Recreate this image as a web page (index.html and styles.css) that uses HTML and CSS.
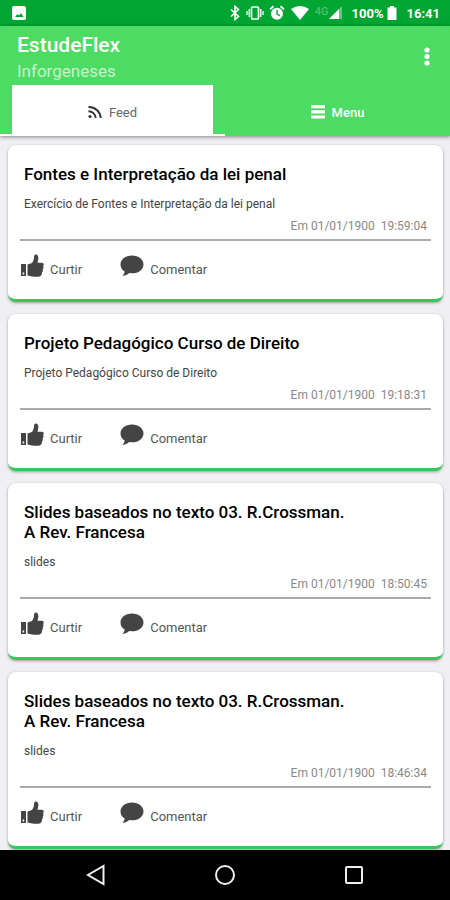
FILE: index.html
```html
<!DOCTYPE html>
<html lang="pt-BR">
<head>
<meta charset="utf-8">
<meta name="viewport" content="width=device-width, initial-scale=1">
<title>EstudeFlex</title>
<link rel="stylesheet" href="styles.css">
</head>
<body>
<svg class="defs" aria-hidden="true">
  <symbol id="thumb" viewBox="0 0 24 24">
    <path fill-rule="evenodd" d="M1 10h5v12H1zM2.600 18.500v2h1.600v-2z"/>
    <path d="M7.500 10.500 12 9c1.200-1.800 2-3.400 2-5.500 0-2 .5-3 1.800-3C18 .5 18.500 3 18.300 5l-.8 3.800h4.300c2 0 2.600 2.200 1.200 3.400.9 1 .7 2.400-.4 3.200.6 1 .3 2.300-.7 3 .4 2.400-.8 4-3.300 4.300-4 .3-7.200-.3-11.100-1.200z"/>
  </symbol>
  <symbol id="bubble" viewBox="0 0 24 24">
    <path d="M12 1.500c6.500 0 11.500 3.900 11.500 8.900s-5 8.900-11.500 8.900l-2.700-.2c-1.600 1.500-4 2.700-6.800 3 .9-1.200 2-2.900 2.200-4.500C2.200 16 .5 13.500.5 10.400.5 5.400 5.500 1.500 12 1.500z"/>
  </symbol>
</svg>
<div class="status">
  <svg class="photo" viewBox="0 0 14 14"><rect width="14" height="14" rx="2" fill="#fff"/><path d="M3 11l2.500-3L7 9.500 9 7l2.500 4z" fill="#00a532"/></svg>
  <div class="status-icons">
    <svg width="12" height="16" viewBox="0 0 12 16"><path d="M2 4.500l7.500 7L6 14.500v-13l3.500 3-7.500 7" fill="none" stroke="#fff" stroke-width="1.600"/></svg>
    <svg width="18" height="16" viewBox="0 0 18 16"><rect x="5.500" y="2" width="7" height="12" rx="1" fill="none" stroke="#fff" stroke-width="1.700"/><path d="M3.200 4v8M14.800 4v8M1 6v4M17 6v4" stroke="#fff" stroke-width="1.300"/></svg>
    <svg width="16" height="16" viewBox="0 0 16 16"><circle cx="8" cy="8.700" r="6" fill="#fff"/><path d="M1 4.200 4.500 1.300M15 4.200l-3.500-2.900" stroke="#fff" stroke-width="1.800"/><path d="M8 5v4l2.800 1.700" fill="none" stroke="#00a532" stroke-width="1.400"/></svg>
    <svg width="20" height="16" viewBox="0 0 20 16"><path d="M1 4q9-6 18 0l-9 11z" fill="#fff"/></svg>
    <span class="network">4G</span>
    <svg class="signal" width="13" height="14" viewBox="0 0 13 14"><path d="M13 0v13H0z" fill="#5fc87c"/><path d="M10 3v10H0z" fill="#fff"/></svg>
    <span class="battery">100%</span>
    <svg width="10" height="16" viewBox="0 0 10 16"><path d="M3 1h4v1.500h2.500V15H.5V2.500H3z" fill="#fff"/></svg>
    <time class="clock">16:41</time>
  </div>
</div>
<header class="header">
  <div class="bar">
    <div>
      <h1>EstudeFlex</h1>
      <p class="subtitle">Inforgeneses</p>
    </div>
    <button class="more" type="button" aria-label="Mais opções"><svg width="6" height="20" viewBox="0 0 6 20" fill="#fff"><circle cx="3" cy="3" r="2.600"/><circle cx="3" cy="9.500" r="2.600"/><circle cx="3" cy="16" r="2.600"/></svg></button>
  </div>
  <nav class="tabs">
    <a class="tab active" href="#feed"><span class="tab-face"><svg width="14" height="14" viewBox="0 0 14 14" fill="none" stroke="#333" stroke-width="1.900"><circle cx="2" cy="11.500" r="1.600" fill="#333" stroke="none"/><path d="M.5 6.300a7 7 0 0 1 7.200 6.700M.5 2a12 12 0 0 1 12.300 11"/></svg>Feed</span></a>
    <a class="tab" href="#menu"><span class="tab-face"><svg width="14" height="14" viewBox="0 0 14 14" fill="#fff"><path d="M0 0h14v3.200H0zM0 5.200h14v3.200H0zM0 10.400h14v3.200H0z"/></svg>Menu</span></a>
  </nav>
</header>
<main class="feed" id="feed">
  <article class="card">
    <h2>Fontes e Interpretação da lei penal</h2>
    <p class="text">Exercício de Fontes e Interpretação da lei penal</p>
    <p class="date">Em 01/01/1900 &nbsp;19:59:04</p>
    <div class="actions"><button type="button"><svg><use href="#thumb"/></svg><span>Curtir</span></button><button type="button"><svg><use href="#bubble"/></svg><span>Comentar</span></button></div>
  </article>
  <article class="card">
    <h2>Projeto Pedagógico Curso de Direito</h2>
    <p class="text">Projeto Pedagógico Curso de Direito</p>
    <p class="date">Em 01/01/1900 &nbsp;19:18:31</p>
    <div class="actions"><button type="button"><svg><use href="#thumb"/></svg><span>Curtir</span></button><button type="button"><svg><use href="#bubble"/></svg><span>Comentar</span></button></div>
  </article>
  <article class="card">
    <h2>Slides baseados no texto 03. R.Crossman.<br>A Rev. Francesa</h2>
    <p class="text">slides</p>
    <p class="date">Em 01/01/1900 &nbsp;18:50:45</p>
    <div class="actions"><button type="button"><svg><use href="#thumb"/></svg><span>Curtir</span></button><button type="button"><svg><use href="#bubble"/></svg><span>Comentar</span></button></div>
  </article>
  <article class="card">
    <h2>Slides baseados no texto 03. R.Crossman.<br>A Rev. Francesa</h2>
    <p class="text">slides</p>
    <p class="date">Em 01/01/1900 &nbsp;18:46:34</p>
    <div class="actions"><button type="button"><svg><use href="#thumb"/></svg><span>Curtir</span></button><button type="button"><svg><use href="#bubble"/></svg><span>Comentar</span></button></div>
  </article>
</main>
<nav class="system">
  <button type="button" aria-label="Voltar"><svg viewBox="0 0 22 22"><path d="M18.500 2v18L3 11z"/></svg></button>
  <button type="button" aria-label="Início"><svg viewBox="0 0 22 22"><circle cx="11" cy="11" r="9"/></svg></button>
  <button type="button" aria-label="Recentes"><svg viewBox="0 0 22 22"><rect x="3" y="3" width="16" height="16" rx="1"/></svg></button>
</nav>
</body>
</html>
```
FILE: styles.css
```css
* { box-sizing: border-box; }
body {
  margin: 0;
  min-height: 100vh;
  display: flex;
  flex-direction: column;
  background: #efeff4;
  font-family: Roboto, sans-serif;
  color: #000;
}
h1, h2, p { margin: 0; }
button { border: 0; padding: 0; background: none; font: inherit; color: inherit; }
svg { display: block; flex: none; }
.defs { position: absolute; width: 0; height: 0; }

.status {
  height: 26px;
  padding: 0 10px 0 12px;
  display: flex;
  align-items: center;
  justify-content: space-between;
  background: #00a532;
  color: #fff;
  font-size: 13px;
  font-weight: 700;
}
.photo { width: 14px; height: 14px; }
.status-icons { display: flex; align-items: center; }
.status-icons svg { margin-right: 5px; }
.network { align-self: flex-start; font-size: 11px; line-height: 14px; font-weight: 500; color: #4fc06e; }
.status-icons .signal { margin-right: 10px; }
.battery { margin-right: 3px; }
.clock { margin-left: 5px; }

.header { background: #4cdc64; color: #fff; box-shadow: 0 1px 4px rgba(0, 0, 0, .45); z-index: 1; }
.bar { height: 59px; padding: 7px 20px 0 17px; display: flex; justify-content: space-between; }
h1 { font-size: 21px; line-height: 25px; font-weight: 500; }
.subtitle { font-size: 17px; line-height: 26px; color: #c4f5cc; }
.more { align-self: flex-start; padding-top: 14px; }
.tabs { display: grid; grid-template-columns: 1fr 1fr; }
.tab {
  height: 51px;
  padding: 0 12px;
  border-bottom: 2px solid transparent;
  color: #fff;
  font-size: 13px;
  font-weight: 500;
  text-decoration: none;
}
.tab-face { height: 100%; padding-top: 6px; display: flex; align-items: center; justify-content: center; gap: 7px; }
.tab-face svg { margin-bottom: 2px; }
.tab.active { border-color: #fff; color: #666; font-weight: 400; }
.active .tab-face { background: #fff; }

.feed { flex: 1; padding: 9px 7px 1px 8px; }
.card {
  padding: 19px 12px 6px;
  border-bottom: 3px solid #35c759;
  border-radius: 8px;
  background: #fff;
  box-shadow: 0 1px 3px rgba(0, 0, 0, .35);
}
.card + .card { margin-top: 12px; }
h2 { padding: 0 4px; font-size: 17px; line-height: 20px; font-weight: 500; }
.text { padding: 10px 4px 0; font-size: 12px; line-height: 20px; color: #444; }
.date {
  padding: 4px 4px 5px;
  border-bottom: 2px solid #aaa;
  font-size: 12px;
  line-height: 16px;
  text-align: right;
  color: #888;
}
.actions { height: 52px; padding-top: 13px; display: flex; gap: 38px; color: #555; font-size: 13px; }
.actions button { display: flex; gap: 6px; height: 24px; }
.actions svg { width: 24px; height: 24px; fill: #444; }
.actions span { line-height: 16px; padding-top: 8px; }

.system { height: 50px; display: flex; align-items: center; justify-content: center; gap: 107px; background: #000; }
.system svg { width: 22px; height: 22px; fill: none; stroke: #eee; stroke-width: 2; }
```
